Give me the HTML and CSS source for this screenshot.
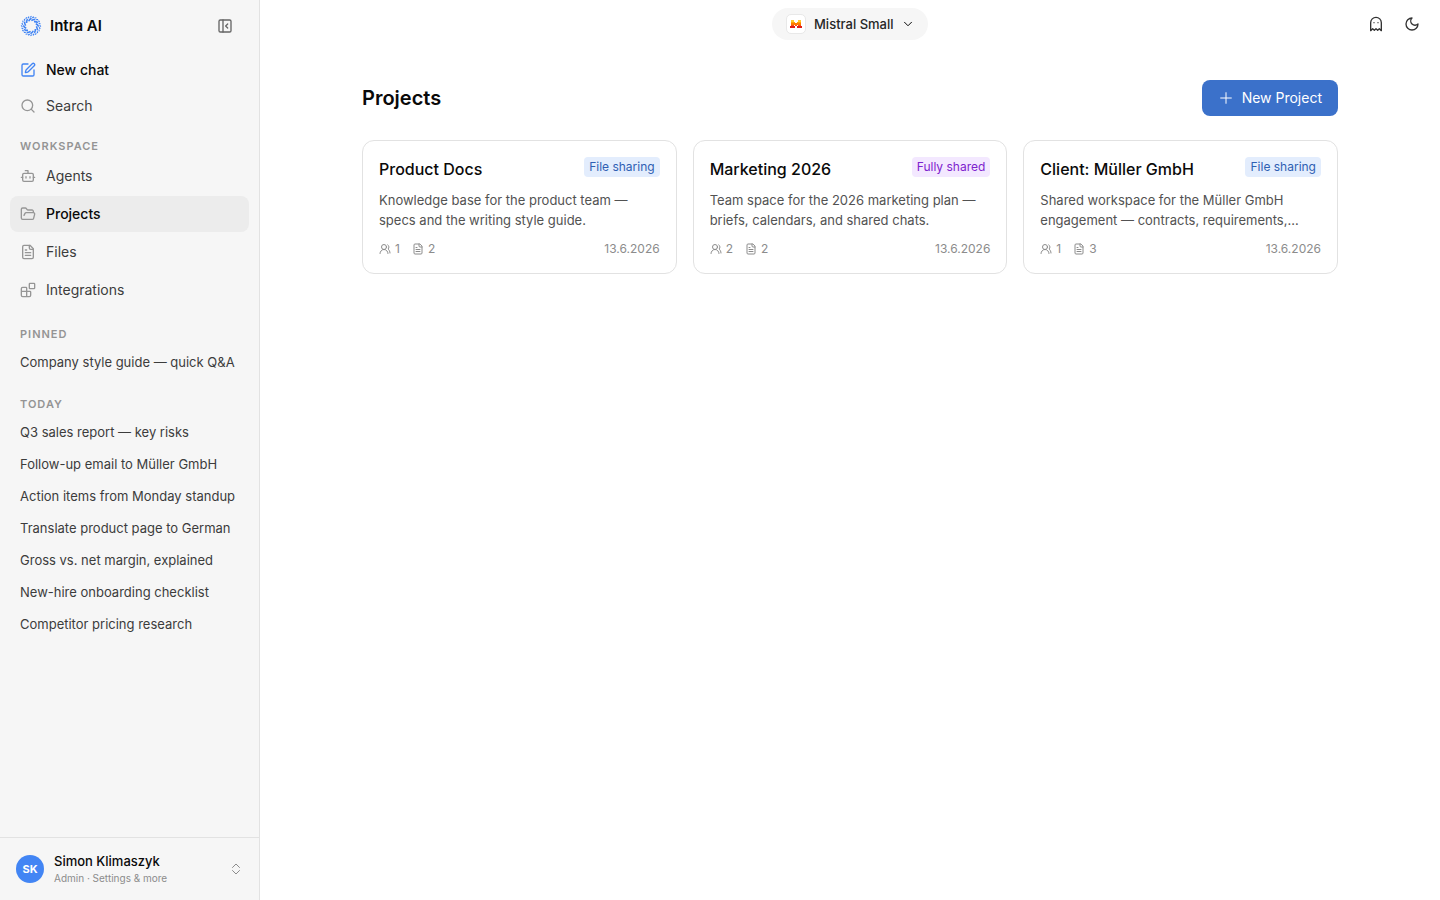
FILE: index.html
```html
<!DOCTYPE html>
<html lang="en">
<head>
  <meta charset="UTF-8">
  <meta name="viewport" content="width=device-width, initial-scale=1">
  <title>Projects</title>
  <link rel="stylesheet" href="styles.css">
</head>
<body>
  <!-- shared icons -->
  <svg class="sprite" aria-hidden="true">
    <symbol id="file" viewBox="0 0 24 24">
      <path d="M15 2H6a2 2 0 0 0-2 2v16a2 2 0 0 0 2 2h12a2 2 0 0 0 2-2V7Z"/><path d="M14 2v4a2 2 0 0 0 2 2h4"/><path d="M10 9H8M16 13H8M16 17H8"/>
    </symbol>
    <symbol id="users" viewBox="0 0 24 24">
      <path d="M18 21a8 8 0 0 0-16 0"/><circle cx="10" cy="8" r="5"/><path d="M22 20c0-3.37-2-6.5-4-8a5 5 0 0 0-.45-8.3"/>
    </symbol>
    <symbol id="arm" viewBox="0 0 24 24" overflow="visible">
      <path d="M9.500 6.800Q10.500 4.600 12.600 3.600" stroke-width="1.700"/><path d="M13.400 3.100L15.200 2" stroke-width="1.400"/><path d="M11 2.600L12.600 1.200" stroke-width="1.100"/>
    </symbol>
  </svg>

  <aside class="sidebar">
    <div class="brand">
      <svg class="logo" viewBox="0 0 24 24">
        <use href="#arm" width="24" height="24"/>
        <use href="#arm" width="24" height="24" transform="rotate(30 12 12)"/>
        <use href="#arm" width="24" height="24" transform="rotate(60 12 12)"/>
        <use href="#arm" width="24" height="24" transform="rotate(90 12 12)"/>
        <use href="#arm" width="24" height="24" transform="rotate(120 12 12)"/>
        <use href="#arm" width="24" height="24" transform="rotate(150 12 12)"/>
        <use href="#arm" width="24" height="24" transform="rotate(180 12 12)"/>
        <use href="#arm" width="24" height="24" transform="rotate(210 12 12)"/>
        <use href="#arm" width="24" height="24" transform="rotate(240 12 12)"/>
        <use href="#arm" width="24" height="24" transform="rotate(270 12 12)"/>
        <use href="#arm" width="24" height="24" transform="rotate(300 12 12)"/>
        <use href="#arm" width="24" height="24" transform="rotate(330 12 12)"/>
      </svg>
      <span class="brand-name">Intra AI</span>
      <button type="button" class="icon-button" aria-label="Collapse sidebar">
        <svg class="icon" viewBox="0 0 24 24"><rect x="3" y="3" width="18" height="18" rx="2"/><path d="M9 3v18M16 15l-3-3 3-3"/></svg>
      </button>
    </div>

    <nav class="nav">
      <a href="#" class="nav-item new-chat">
        <svg class="icon" viewBox="0 0 24 24"><path d="M12 3H5a2 2 0 0 0-2 2v14a2 2 0 0 0 2 2h14a2 2 0 0 0 2-2v-7"/><path d="M18.375 2.625a1 1 0 0 1 3 3l-9.013 9.014a2 2 0 0 1-.853.505l-2.873.84a.5.5 0 0 1-.62-.62l.84-2.873a2 2 0 0 1 .506-.852z"/></svg>
        New chat
      </a>
      <a href="#" class="nav-item">
        <svg class="icon" viewBox="0 0 24 24"><circle cx="11" cy="11" r="8"/><path d="m21 21-4.300-4.300"/></svg>
        Search
      </a>
    </nav>

    <h2 class="section-label">Workspace</h2>
    <nav class="nav workspace">
      <a href="#" class="nav-item">
        <svg class="icon" viewBox="0 0 24 24"><path d="M12 8V4H8"/><rect x="4" y="8" width="16" height="12" rx="2"/><path d="M2 14h2M20 14h2M15 13v2M9 13v2"/></svg>
        Agents
      </a>
      <a href="#" class="nav-item active" aria-current="page">
        <svg class="icon" viewBox="0 0 24 24"><path d="m6 14 1.500-2.900A2 2 0 0 1 9.240 10H20a2 2 0 0 1 1.940 2.500l-1.540 6a2 2 0 0 1-1.950 1.500H4a2 2 0 0 1-2-2V5a2 2 0 0 1 2-2h3.900a2 2 0 0 1 1.690.9l.81 1.200a2 2 0 0 0 1.670.9H18a2 2 0 0 1 2 2v2"/></svg>
        Projects
      </a>
      <a href="#" class="nav-item">
        <svg class="icon"><use href="#file"/></svg>
        Files
      </a>
      <a href="#" class="nav-item">
        <svg class="icon" viewBox="0 0 24 24"><rect x="14" y="2" width="8" height="8" rx="1"/><path d="M10 22V9a1 1 0 0 0-1-1H4a2 2 0 0 0-2 2v10a2 2 0 0 0 2 2h10a2 2 0 0 0 2-2v-5a1 1 0 0 0-1-1H2"/></svg>
        Integrations
      </a>
    </nav>

    <h2 class="section-label">Pinned</h2>
    <nav class="chats">
      <a href="#">Company style guide — quick Q&amp;A</a>
    </nav>

    <h2 class="section-label">Today</h2>
    <nav class="chats">
      <a href="#">Q3 sales report — key risks</a>
      <a href="#">Follow-up email to Müller GmbH</a>
      <a href="#">Action items from Monday standup</a>
      <a href="#">Translate product page to German</a>
      <a href="#">Gross vs. net margin, explained</a>
      <a href="#">New-hire onboarding checklist</a>
      <a href="#">Competitor pricing research</a>
    </nav>

    <button type="button" class="account">
      <span class="avatar">SK</span>
      <span class="account-text">
        <span class="account-name">Simon Klimaszyk</span>
        <span class="account-role">Admin · Settings &amp; more</span>
      </span>
      <svg class="icon small" viewBox="0 0 24 24"><path d="m5 9 7-7 7 7M5 15l7 7 7-7"/></svg>
    </button>
  </aside>

  <div class="page">
    <header class="topbar">
      <label class="model" for="model">
        <span class="model-logo">
          <svg viewBox="0 0 14 12">
            <path fill="#ffc72c" d="M2 2h3v2H2zM9 2h3v2H9z"/>
            <path fill="#ffa300" d="M2 4h4v1H2zM8 4h4v1H8z"/>
            <path fill="#ff7a00" d="M2 5h10v2H2z"/>
            <path fill="#f9500f" d="M2 7h3v1H2zM6 7h2v1H6zM9 7h3v1H9z"/>
            <path fill="#df1f16" d="M1 8h5v2H1zM8 8h5v2H8z"/>
          </svg>
        </span>
        <select id="model" aria-label="Model">
          <option>Mistral Small</option>
        </select>
        <svg class="icon small" viewBox="0 0 24 24"><path d="m5 8.500 7 7 7-7"/></svg>
      </label>
      <div class="tools">
        <button type="button" class="icon-button" aria-label="Temporary chat">
          <svg class="icon" viewBox="0 0 24 24"><path d="M9 10h.01M15 10h.01M12 2a8 8 0 0 0-8 8v12l3-3 2.500 2.500L12 19l2.500 2.500L17 19l3 3V10a8 8 0 0 0-8-8z"/></svg>
        </button>
        <button type="button" class="icon-button" aria-label="Dark mode">
          <svg class="icon" viewBox="0 0 24 24"><path d="M12 3a6 6 0 0 0 9 9 9 9 0 1 1-9-9Z"/></svg>
        </button>
      </div>
    </header>

    <main class="content">
      <div class="content-head">
        <h1>Projects</h1>
        <button type="button" class="primary">
          <svg class="icon" viewBox="0 0 24 24"><path d="M4 12h16M12 4v16"/></svg>
          New Project
        </button>
      </div>

      <div class="cards">
        <article class="card">
          <div class="card-head">
            <h3>Product Docs</h3>
            <span class="badge">File sharing</span>
          </div>
          <p>Knowledge base for the product team — specs and the writing style guide.</p>
          <div class="meta">
            <span><svg class="icon"><use href="#users"/></svg>1</span>
            <span><svg class="icon"><use href="#file"/></svg>2</span>
            <time datetime="2026-06-13">13.6.2026</time>
          </div>
        </article>

        <article class="card">
          <div class="card-head">
            <h3>Marketing 2026</h3>
            <span class="badge full">Fully shared</span>
          </div>
          <p>Team space for the 2026 marketing plan — briefs, calendars, and shared chats.</p>
          <div class="meta">
            <span><svg class="icon"><use href="#users"/></svg>2</span>
            <span><svg class="icon"><use href="#file"/></svg>2</span>
            <time datetime="2026-06-13">13.6.2026</time>
          </div>
        </article>

        <article class="card">
          <div class="card-head">
            <h3>Client: Müller GmbH</h3>
            <span class="badge">File sharing</span>
          </div>
          <p>Shared workspace for the Müller GmbH engagement — contracts, requirements,…</p>
          <div class="meta">
            <span><svg class="icon"><use href="#users"/></svg>1</span>
            <span><svg class="icon"><use href="#file"/></svg>3</span>
            <time datetime="2026-06-13">13.6.2026</time>
          </div>
        </article>
      </div>
    </main>
  </div>
</body>
</html>
```
FILE: styles.css
```css
:root {
  --blue: #3b71ca;
  --sidebar: #f6f6f6;
  --line: #e2e2e2;
  --text: #0a0a0a;
  --soft: #3c3c3c;
  --muted: #8c8c8c;
}

* {
  box-sizing: border-box;
}

body {
  margin: 0;
  min-height: 100vh;
  display: flex;
  font-family: Inter, "Liberation Sans", sans-serif;
  font-size: 14px;
  line-height: 20px;
  color: var(--text);
  background: #fff;
}

h1, h2, h3, p {
  margin: 0;
}

a {
  color: inherit;
  text-decoration: none;
}

button, select {
  font: inherit;
  color: inherit;
  background: none;
  border: none;
  padding: 0;
  cursor: pointer;
}

.sprite {
  position: absolute;
  width: 0;
  height: 0;
}

.icon {
  width: 16px;
  height: 16px;
  flex: none;
  fill: none;
  stroke: currentColor;
  stroke-width: 2;
  stroke-linecap: round;
  stroke-linejoin: round;
}

.icon.small {
  width: 12px;
  height: 12px;
}

.icon-button {
  display: flex;
  padding: 8px;
  color: #333;
}

/* Sidebar */
.sidebar {
  width: 260px;
  flex: none;
  display: flex;
  flex-direction: column;
  background: var(--sidebar);
  border-right: 1px solid var(--line);
}

.brand {
  display: flex;
  align-items: center;
  height: 52px;
  padding: 0 18px 0 20px;
}

.logo {
  width: 22px;
  height: 22px;
  fill: none;
  stroke: #4285f4;
}

.brand-name {
  margin-left: 8px;
  font-size: 15px;
  font-weight: 600;
}

.brand .icon-button {
  margin-left: auto;
  color: #666;
}

.nav {
  display: flex;
  flex-direction: column;
  padding: 0 10px;
}

.workspace {
  gap: 2px;
}

.nav-item {
  display: flex;
  align-items: center;
  gap: 10px;
  height: 36px;
  padding: 0 10px;
  border-radius: 8px;
  color: var(--soft);
}

.nav-item .icon {
  color: #969696;
}

.new-chat {
  color: var(--text);
  font-weight: 500;
}

.new-chat .icon {
  color: #4285f4;
}

.active {
  color: var(--text);
  font-weight: 500;
  background: #ececec;
}

.section-label {
  padding: 19px 20px 5px;
  font-size: 11px;
  line-height: 14px;
  font-weight: 600;
  letter-spacing: 1px;
  text-transform: uppercase;
  color: #949494;
}

.nav:not(.workspace) + .section-label {
  padding-top: 15px;
}

.chats {
  display: flex;
  flex-direction: column;
}

.chats a {
  padding: 6px 20px;
  font-size: 13px;
  color: var(--soft);
  white-space: nowrap;
}

.account {
  display: flex;
  align-items: center;
  gap: 10px;
  height: 63px;
  margin-top: auto;
  padding: 0 17px 0 16px;
  border-top: 1px solid var(--line);
  text-align: left;
}

.account .icon {
  margin-left: auto;
  color: var(--muted);
}

.avatar {
  width: 28px;
  height: 28px;
  border-radius: 50%;
  background: #4285f4;
  color: #fff;
  font-size: 11px;
  line-height: 28px;
  font-weight: 700;
  text-align: center;
}

.account-text {
  display: flex;
  flex-direction: column;
}

.account-name {
  font-size: 13px;
  line-height: 18px;
  font-weight: 500;
}

.account-role {
  font-size: 10px;
  line-height: 16px;
  color: var(--muted);
}

/* Main column */
.page {
  flex: 1;
  min-width: 0;
}

.topbar {
  display: grid;
  grid-template-columns: 1fr auto 1fr;
  align-items: center;
  height: 48px;
  padding: 0 12px;
}

.model {
  grid-column: 2;
  display: flex;
  align-items: center;
  gap: 8px;
  height: 32px;
  padding: 0 14px;
  border-radius: 16px;
  background: var(--sidebar);
}

.model select {
  appearance: none;
  font-size: 13px;
  font-weight: 500;
  color: #262626;
}

.model-logo {
  display: flex;
  align-items: center;
  justify-content: center;
  width: 20px;
  height: 20px;
  border: 1px solid #e8e8e8;
  border-radius: 5px;
  background: #fff;
}

.model-logo svg {
  width: 14px;
  height: 12px;
}

.tools {
  display: flex;
  gap: 4px;
  justify-content: flex-end;
}

.content {
  max-width: 1024px;
  margin: 0 auto;
  padding: 32px 24px;
}

.content-head {
  display: flex;
  align-items: center;
  justify-content: space-between;
  margin-bottom: 24px;
}

h1 {
  font-size: 20px;
  line-height: 28px;
  font-weight: 600;
}

.primary {
  display: flex;
  align-items: center;
  gap: 8px;
  height: 36px;
  padding: 0 16px;
  border-radius: 8px;
  background: var(--blue);
  color: #fff;
}

.primary .icon {
  stroke-width: 1.5;
}

.cards {
  display: grid;
  grid-template-columns: repeat(3, 1fr);
  gap: 16px;
}

.card {
  padding: 16px;
  border: 1px solid var(--line);
  border-radius: 12px;
}

.card-head {
  display: flex;
  align-items: flex-start;
  justify-content: space-between;
  margin-bottom: 9px;
}

h3 {
  font-size: 16px;
  line-height: 24px;
  font-weight: 500;
}

.badge {
  padding: 2px 5px;
  border-radius: 4px;
  background: #e3edfd;
  color: #2f5fb3;
  font-size: 12px;
  line-height: 16px;
}

.badge.full {
  background: #f3e8ff;
  color: #7e22ce;
}

.card p {
  font-size: 13px;
  color: #525252;
}

.meta {
  display: flex;
  align-items: center;
  gap: 12px;
  margin-top: 11px;
  font-size: 12px;
  line-height: 16px;
  color: var(--muted);
}

.meta span {
  display: flex;
  align-items: center;
  gap: 4px;
}

.meta .icon {
  width: 12px;
  height: 12px;
}

.meta time {
  margin-left: auto;
}
```
